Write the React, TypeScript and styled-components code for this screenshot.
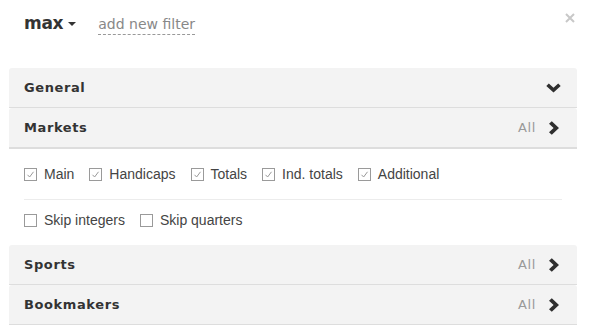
import React from 'react'
import styled, { createGlobalStyle } from 'styled-components'

const GlobalStyle = createGlobalStyle`
  html, body {
    margin: 0;
    padding: 0;
    background: #fff;
  }
  body {
    font-family: 'DejaVu Sans', 'Liberation Sans', sans-serif;
  }
`

const Page = styled.div`
  padding: 0 12px 0 9px;
  width: 589px;
  box-sizing: border-box;
`

const Header = styled.div`
  display: flex;
  align-items: center;
  height: 46px;
  padding: 0 2px 0 15px;
`

const UserName = styled.div`
  display: flex;
  align-items: center;
  gap: 5px;
  font-size: 17px;
  font-weight: bold;
  color: #333;
  letter-spacing: -0.3px;
  cursor: pointer;
`

const Caret = styled.span`
  width: 0;
  height: 0;
  margin-top: 2px;
  border-left: 4px solid transparent;
  border-right: 4px solid transparent;
  border-top: 4px solid #333;
`

const AddFilter = styled.a`
  margin: 3px 0 0 22px;
  font-size: 14px;
  color: #888;
  padding-bottom: 1px;
  border-bottom: 1px dashed #999;
  cursor: pointer;
  line-height: 18px;
`

const CloseButton = styled.button`
  margin-left: auto;
  align-self: flex-start;
  margin-top: 13px;
  padding: 0;
  border: 0;
  background: transparent;
  display: flex;
  cursor: pointer;
`

const Panel = styled.div`
  margin-top: 22px;
`

const SectionHead = styled.div<{ expanded?: boolean }>`
  display: flex;
  align-items: center;
  height: 39px;
  padding: 0 17px 0 15px;
  background: #f3f3f3;
  border-radius: 3px 3px 0 0;
  border-bottom: ${p => (p.expanded ? '2px' : '1px')} solid #dddddd;
`

const SectionTitle = styled.div`
  font-size: 13px;
  font-weight: bold;
  letter-spacing: 0.6px;
  color: #333;
`

const Summary = styled.span`
  margin-left: auto;
  margin-right: 12px;
  font-size: 13px;
  letter-spacing: 0.6px;
  color: #999;
`

const Chevron = styled.svg<{ down?: boolean }>`
  display: block;
  margin-left: ${p => (p.down ? 'auto' : '0')};
  margin-right: ${p => (p.down ? '-1px' : '0')};
`

const Content = styled.div`
  padding: 14px 15px 14px;
`

const OptionRow = styled.div`
  display: flex;
  align-items: center;
  gap: 15px;
  height: 22px;
`

const Divider = styled.div`
  height: 1px;
  background: #ececec;
  margin: 14px 0 9px;
`

const Option = styled.label`
  display: flex;
  align-items: center;
  gap: 7px;
  font-family: 'Liberation Sans', Arial, sans-serif;
  font-size: 14px;
  color: #444;
  cursor: pointer;
`

const Box = styled.span`
  width: 11px;
  height: 11px;
  border: 1px solid #9a9a9a;
  display: flex;
  align-items: center;
  justify-content: center;
  background: #fff;
`

const ChevronRight = () => (
  <Chevron width="12" height="14" viewBox="0 0 12 14">
    <path d="M1 2.8 L3.8 0.3 L11 7 L3.8 13.7 L1 11.2 L5.6 7 Z" fill="#2f2f2f" />
  </Chevron>
)

const ChevronDown = () => (
  <Chevron down width="15" height="10" viewBox="0 0 15 10">
    <path d="M0.3 3 L2.8 0.4 L7.5 4.8 L12.2 0.4 L14.7 3 L7.5 9.6 Z" fill="#2f2f2f" />
  </Chevron>
)

type CheckProps = { label: string; checked?: boolean }

const Check = ({ label, checked }: CheckProps) => (
  <Option>
    <Box>
      {checked && (
        <svg width="9" height="9" viewBox="0 0 9 9">
          <path d="M1.5 4.8 L3.6 7 L7.5 1.8" fill="none" stroke="#9a9a9a" strokeWidth="1" />
        </svg>
      )}
    </Box>
    {label}
  </Option>
)

type SectionProps = { title: string; summary?: string }

const CollapsedSection = ({ title, summary }: SectionProps) => (
  <SectionHead>
    <SectionTitle>{title}</SectionTitle>
    <Summary>{summary}</Summary>
    <ChevronRight />
  </SectionHead>
)

const markets = ['Main', 'Handicaps', 'Totals', 'Ind. totals', 'Additional']
const skips = ['Skip integers', 'Skip quarters']

export default function App() {
  return (
    <Page>
      <GlobalStyle />
      <Header>
        <UserName>
          max
          <Caret />
        </UserName>
        <AddFilter>add new filter</AddFilter>
        <CloseButton aria-label="close">
          <svg width="10" height="10" viewBox="0 0 10 10">
            <path d="M1 1 L9 9 M9 1 L1 9" stroke="#c8c8c8" strokeWidth="2" />
          </svg>
        </CloseButton>
      </Header>

      <Panel>
        <SectionHead>
          <SectionTitle>General</SectionTitle>
          <ChevronDown />
        </SectionHead>
        <SectionHead expanded>
          <SectionTitle>Markets</SectionTitle>
          <Summary>All</Summary>
          <ChevronRight />
        </SectionHead>
        <Content>
          <OptionRow>
            {markets.map(m => (
              <Check key={m} label={m} checked />
            ))}
          </OptionRow>
          <Divider />
          <OptionRow>
            {skips.map(s => (
              <Check key={s} label={s} />
            ))}
          </OptionRow>
        </Content>
        <CollapsedSection title="Sports" summary="All" />
        <CollapsedSection title="Bookmakers" summary="All" />
      </Panel>
    </Page>
  )
}
